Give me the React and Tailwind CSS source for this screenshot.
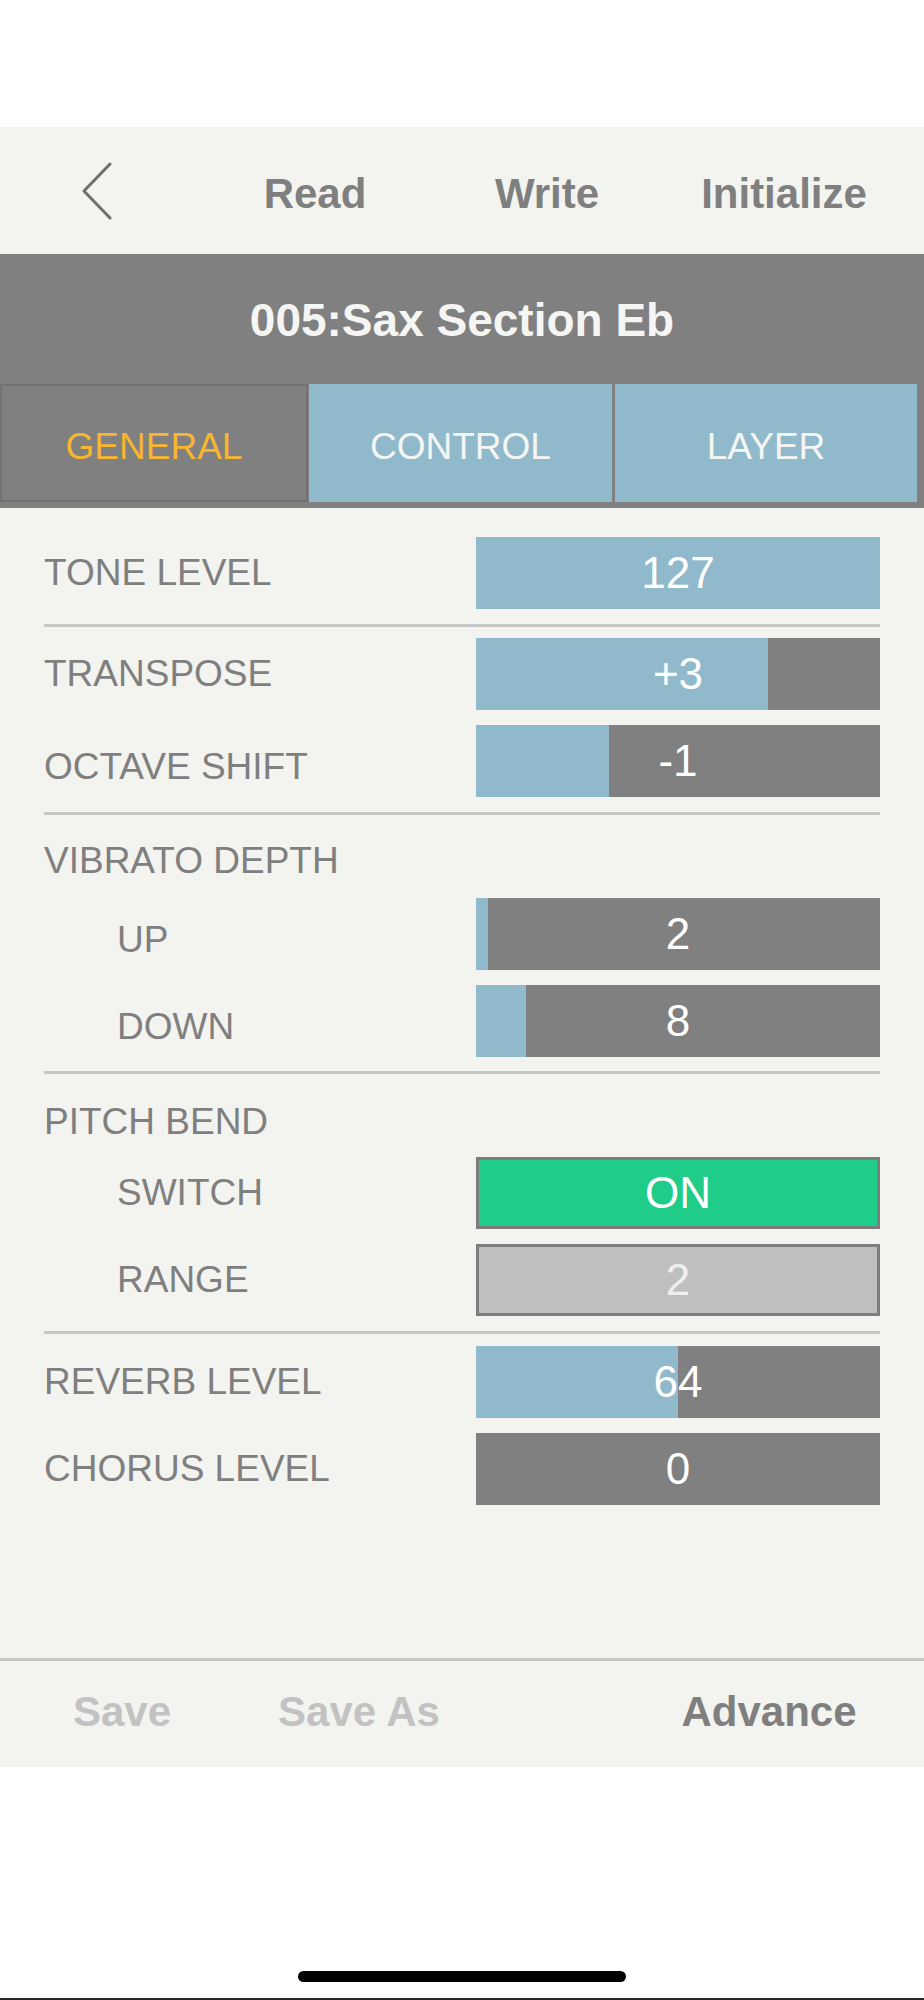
import React from "react";

const FONT = { fontFamily: '"Liberation Sans", Arial, sans-serif' };

function Divider({ className = "" }) {
  return <div className={`h-[3px] bg-[#c6c6c4] ${className}`} />;
}

function Bar({ value, fill, variant = "slider" }) {
  if (variant === "switch") {
    return (
      <div className="flex h-[72px] w-[404px] items-center justify-center border-[3px] border-[#7d7d7d] bg-[#1fcc88] text-[44px] text-white">
        {value}
      </div>
    );
  }
  if (variant === "disabled") {
    return (
      <div className="flex h-[72px] w-[404px] items-center justify-center border-[3px] border-[#7d7d7d] bg-[#bfbfbf] text-[44px] text-[#efefef]">
        {value}
      </div>
    );
  }
  return (
    <div className="relative h-[72px] w-[404px] bg-[#808080]">
      <div className="h-full bg-[#91b9cc]" style={{ width: `${fill * 100}%` }} />
      <div className="absolute inset-0 flex items-center justify-center text-[44px] text-white">
        {value}
      </div>
    </div>
  );
}

function Row({ label, indent, low, className = "", ...bar }) {
  return (
    <div className={`flex h-[72px] items-center justify-between ${className}`}>
      <span
        className={`text-[37px] text-[#7f7f7f] ${indent ? "pl-[73px]" : ""} ${low ? "pt-[12px]" : ""}`}
      >
        {label}
      </span>
      <Bar {...bar} />
    </div>
  );
}

function Heading({ children, className = "" }) {
  return (
    <div className={`flex h-[44px] items-center text-[37px] text-[#7f7f7f] ${className}`}>
      {children}
    </div>
  );
}

export default function App() {
  return (
    <div className="flex h-[2000px] w-[924px] flex-col bg-white" style={FONT}>
      <div className="h-[127px]" />

      {/* top nav */}
      <div className="grid h-[127px] grid-cols-[194px_242px_222px_252px] items-center bg-[#f3f3ef] text-[42px] font-bold text-[#7f7f7f]">
        <div className="flex justify-center">
          <svg width="32" height="58" viewBox="0 0 32 58" fill="none">
            <polyline points="29,2 3,29 29,56" stroke="#6e6e6e" strokeWidth="3" strokeLinecap="round" strokeLinejoin="round" />
          </svg>
        </div>
        <div className="pt-[5px] text-center">Read</div>
        <div className="pt-[5px] text-center">Write</div>
        <div className="pt-[5px] text-center">Initialize</div>
      </div>

      {/* title + tabs */}
      <div className="bg-[#808080]">
        <div className="flex h-[130px] items-center justify-center pt-[2px] text-[46px] font-bold text-[#f5f5f3]">
          005:Sax Section Eb
        </div>
        <div className="flex pb-[6px] text-[37px]">
          <div className="flex h-[118px] w-[308px] items-center justify-center border-2 border-[#727272] pt-[8px] text-[#f8b52f]">
            GENERAL
          </div>
          <div className="ml-[1px] flex h-[118px] w-[303px] items-center justify-center bg-[#91b9cc] pt-[8px] text-[#f5f5f3]">
            CONTROL
          </div>
          <div className="ml-[3px] flex h-[118px] w-[302px] items-center justify-center bg-[#91b9cc] pt-[8px] text-[#f5f5f3]">
            LAYER
          </div>
        </div>
      </div>

      {/* parameters */}
      <div className="h-[1150px] bg-[#f3f3ef] px-[44px]">
        <Row label="TONE LEVEL" value="127" fill={1} className="mt-[29px]" />
        <Divider className="mt-[15px]" />
        <Row label="TRANSPOSE" value="+3" fill={0.723} className="mt-[11px]" />
        <Row label="OCTAVE SHIFT" low value="-1" fill={0.33} className="mt-[15px]" />
        <Divider className="mt-[15px]" />
        <Heading className="mt-[24px]">VIBRATO DEPTH</Heading>
        <Row label="UP" indent low value="2" fill={0.03} className="mt-[15px]" />
        <Row label="DOWN" indent low value="8" fill={0.124} className="mt-[15px]" />
        <Divider className="mt-[14px]" />
        <Heading className="mt-[26px]">PITCH BEND</Heading>
        <Row label="SWITCH" indent value="ON" variant="switch" className="mt-[13px]" />
        <Row label="RANGE" indent value="2" variant="disabled" className="mt-[15px]" />
        <Divider className="mt-[15px]" />
        <Row label="REVERB LEVEL" value="64" fill={0.5} className="mt-[12px]" />
        <Row label="CHORUS LEVEL" value="0" fill={0} className="mt-[15px]" />
      </div>

      {/* footer */}
      <div className="h-[3px] bg-[#c6c6c4]" />
      <div className="grid h-[106px] grid-cols-[244px_230px_140px_310px] items-center bg-[#f3f3ef] pb-[5px] text-[42px] font-bold">
        <div className="text-center text-[#c2c2c2]">Save</div>
        <div className="text-center text-[#c2c2c2]">Save As</div>
        <div />
        <div className="text-center text-[#7f7f7f]">Advance</div>
      </div>

      <div className="flex flex-1 flex-col items-center justify-end">
        <div className="mb-[16px] h-[11px] w-[328px] rounded-full bg-black" />
        <div className="h-[2px] w-full bg-[#2a2a2a]" />
      </div>
    </div>
  );
}
